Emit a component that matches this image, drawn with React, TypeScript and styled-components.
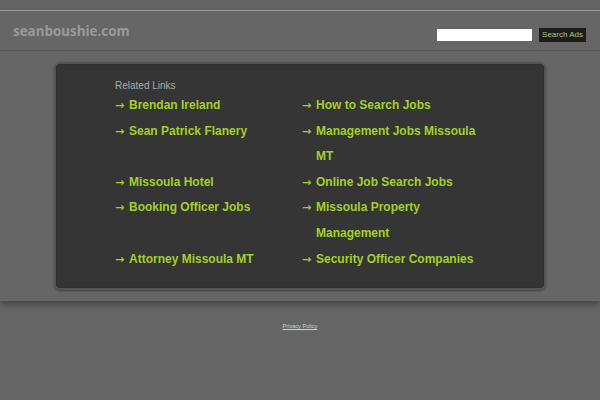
import React from "react";
import styled, { createGlobalStyle } from "styled-components";

const GlobalStyle = createGlobalStyle`
  html, body {
    margin: 0;
    padding: 0;
    background: #666666;
    font-family: "Liberation Sans", Arial, sans-serif;
  }
`;

const TopStrip = styled.div`
  height: 10px;
  background: #646464;
  border-bottom: 1px solid #9a9a9a;
`;

const Header = styled.div`
  height: 39px;
  display: flex;
  align-items: center;
  justify-content: space-between;
  padding: 0 14px 0 13px;
  border-bottom: 1px solid #5a5a5a;
`;

const SiteTitle = styled.div`
  font-family: "Open Sans", "Noto Sans", sans-serif;
  font-weight: bold;
  font-size: 13.4px;
  color: #9a9a9a;
`;

const SearchForm = styled.form`
  display: flex;
  align-items: center;
  gap: 7px;
  margin-top: 8px;
`;

const SearchInput = styled.input`
  width: 95px;
  height: 12px;
  padding: 0;
  border: none;
  background: #ffffff;
`;

const SearchButton = styled.button`
  height: 14px;
  padding: 0 3px;
  border: none;
  background: #1c1c1c;
  color: #a9c87a;
  font-family: "Liberation Sans", Arial, sans-serif;
  font-size: 8px;
  line-height: 14px;
`;

const Main = styled.div`
  padding: 11px 0;
  background: #666666;
  box-shadow: 0 4px 6px rgba(0, 0, 0, 0.3);
  position: relative;
`;

const Box = styled.div`
  width: 492px;
  margin: 0 auto;
  padding: 17px 0 16px 59px;
  box-sizing: border-box;
  background: #353535;
  border: 2px solid #555555;
  border-radius: 6px;
  box-shadow: 0 1px 2px rgba(0, 0, 0, 0.35), inset 0 0 2px rgba(0, 0, 0, 0.4);
`;

const BoxTitle = styled.div`
  font-size: 10px;
  line-height: 12px;
  color: #ababab;
  margin-top: -1px;
`;

const LinkGrid = styled.div`
  display: grid;
  grid-template-columns: 187px 187px;
  margin-top: 1px;
`;

const LinkItem = styled.a`
  display: flex;
  font-size: 12px;
  font-weight: bold;
  line-height: 25.6px;
  color: #a3cf2a;
  text-decoration: none;
`;

const Arrow = styled.span`
  flex: 0 0 14px;
  font-family: "DejaVu Sans", sans-serif;
  font-weight: bold;
  font-size: 11px;
`;

const Footer = styled.div`
  text-align: center;
  padding-top: 13px;
`;

const FooterLink = styled.a`
  font-size: 5.6px;
  color: #d0d0d0;
  text-decoration: underline;
`;

const links = [
  "Brendan Ireland",
  "How to Search Jobs",
  "Sean Patrick Flanery",
  "Management Jobs Missoula MT",
  "Missoula Hotel",
  "Online Job Search Jobs",
  "Booking Officer Jobs",
  "Missoula Property Management",
  "Attorney Missoula MT",
  "Security Officer Companies",
];

export default function App() {
  return (
    <>
      <GlobalStyle />
      <TopStrip />
      <Header>
        <SiteTitle>seanboushie.com</SiteTitle>
        <SearchForm onSubmit={(e) => e.preventDefault()}>
          <SearchInput type="text" />
          <SearchButton type="submit">Search Ads</SearchButton>
        </SearchForm>
      </Header>
      <Main>
        <Box>
          <BoxTitle>Related Links</BoxTitle>
          <LinkGrid>
            {links.map((text) => (
              <LinkItem key={text} href="#">
                <Arrow>→</Arrow>
                <span>{text}</span>
              </LinkItem>
            ))}
          </LinkGrid>
        </Box>
      </Main>
      <Footer>
        <FooterLink href="#">Privacy Policy</FooterLink>
      </Footer>
    </>
  );
}
